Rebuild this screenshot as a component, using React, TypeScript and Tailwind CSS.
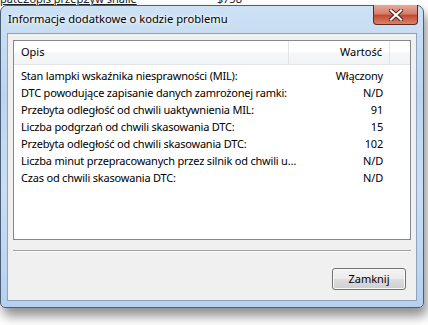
const rows: [string, string][] = [
  ["Stan lampki wskaźnika niesprawności (MIL):", "Włączony"],
  ["DTC powodujące zapisanie danych zamrożonej ramki:", "N/D"],
  ["Przebyta odległość od chwili uaktywnienia MIL:", "91"],
  ["Liczba podgrzań od chwili skasowania DTC:", "15"],
  ["Przebyta odległość od chwili skasowania DTC:", "102"],
  ["Liczba minut przepracowanych przez silnik od chwili uaktywnienia MIL:", "N/D"],
  ["Czas od chwili skasowania DTC:", "N/D"],
];

const font = { fontFamily: '"Segoe UI", "Noto Sans", sans-serif' };

export default function App() {
  return (
    <div className="relative w-[428px] h-[325px] overflow-hidden bg-white text-[11px] text-black" style={font}>
      {/* desktop content behind the dialog */}
      <div className="absolute left-0 top-[-9px] flex gap-[80px] text-[11px] text-[#222]">
        <span className="underline">pate2opis przep2yw snalie</span>
        <span>$758</span>
      </div>

      {/* dialog window */}
      <div className="absolute left-0 top-[5px] w-[424px] h-[303px] rounded-t-[7px] rounded-b-[5px] border border-[#4b5f78] bg-[linear-gradient(180deg,#cde1f4_0%,#bcd5ee_30%,#c9def3_60%,#b6d1ef_100%)] shadow-[3px_8px_12px_rgba(0,0,0,0.45)] flex flex-col">
        {/* title bar */}
        <div className="relative h-[27px] flex items-center pl-[7px] shrink-0">
          <span className="text-[11.2px] text-black [text-shadow:0_0_6px_#ffffff,0_0_3px_#ffffff]">
            Informacje dodatkowe o kodzie problemu
          </span>
          <div className="absolute right-[5px] top-[-1px] w-[45px] h-[20px] rounded-b-[4px] border border-[#5b2a24] border-t-0 bg-[linear-gradient(180deg,#e9a99a_0%,#d57f6c_45%,#c54a35_55%,#d9826c_100%)] flex items-center justify-center">
            <svg width="14" height="12" viewBox="0 0 14 12">
              <path d="M2 1.5 L12 10.5 M12 1.5 L2 10.5" stroke="#4a1f18" strokeWidth="4" strokeLinecap="square" />
              <path d="M2 1.5 L12 10.5 M12 1.5 L2 10.5" stroke="#ffffff" strokeWidth="2.2" strokeLinecap="square" />
            </svg>
          </div>
        </div>

        {/* client area */}
        <div className="mx-[6px] mb-[6px] flex-1 border border-[#8fa4bc] bg-[#f0f0f0] flex flex-col px-[5px] pt-[6px] pb-[10px]">
          {/* list view */}
          <div className="h-[200px] border border-[#828790] bg-white flex flex-col">
            <div className="h-[24px] flex border-b border-[#e5e5e5] bg-[linear-gradient(180deg,#ffffff_0%,#ffffff_45%,#f5f6f7_55%,#f3f4f5_100%)]">
              <div className="w-[275px] pl-[7px] flex items-center border-r border-[#e3e3e3]">Opis</div>
              <div className="w-[101px] pr-[7px] flex items-center justify-end border-r border-[#e3e3e3]">Wartość</div>
              <div className="flex-1" />
            </div>
            <div className="pt-[2px] flex flex-col tracking-[-0.2px]">
              {rows.map(([label, value]) => (
                <div key={label} className="h-[17px] flex items-center">
                  <div className="w-[287px] shrink-0 pl-[7px] pr-[2px] truncate leading-[17px]">{label}</div>
                  <div className="w-[89px] shrink-0 pr-[7px] text-right leading-[17px]">{value}</div>
                </div>
              ))}
            </div>
          </div>

          {/* separator */}
          <div className="mt-[10px] h-[2px] border-t border-[#a0a0a0] border-b border-b-white" />

          <div className="mt-auto flex justify-end pr-[5px]">
            <button className="w-[74px] h-[22px] rounded-[3px] border border-[#707070] bg-[linear-gradient(180deg,#f2f2f2_0%,#ebebeb_48%,#dddddd_52%,#cfcfcf_100%)] shadow-[inset_0_0_0_1px_#fcfcfc] text-[11px] text-black">
              Zamknij
            </button>
          </div>
        </div>
      </div>
    </div>
  );
}
